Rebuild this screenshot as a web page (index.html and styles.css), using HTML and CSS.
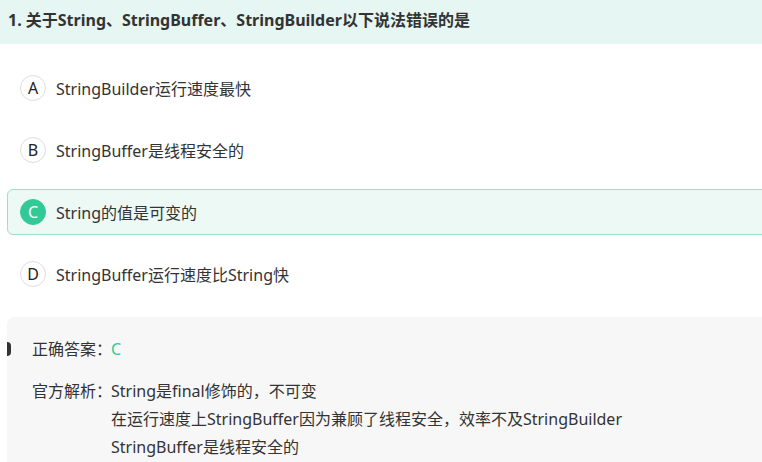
FILE: index.html
```html
<!DOCTYPE html>
<html lang="zh">
<head>
<meta charset="utf-8">
<link rel="stylesheet" href="styles.css">
</head>
<body>
<div class="page">
  <div class="q-title">1. 关于String、StringBuffer、StringBuilder以下说法错误的是</div>
  <div class="options">
    <div class="option"><span class="letter">A</span><span class="opt-text">StringBuilder运行速度最快</span></div>
    <div class="option"><span class="letter">B</span><span class="opt-text">StringBuffer是线程安全的</span></div>
    <div class="option selected"><span class="letter">C</span><span class="opt-text">String的值是可变的</span></div>
    <div class="option"><span class="letter">D</span><span class="opt-text">StringBuffer运行速度比String快</span></div>
  </div>
  <div class="answer">
    <div class="ans-row"><span class="label">正确答案：</span><span class="right">C</span></div>
    <div class="ans-row analysis"><span class="label">官方解析：</span>
      <div class="lines">
        <div>String是final修饰的，不可变</div>
        <div>在运行速度上StringBuffer因为兼顾了线程安全，效率不及StringBuilder</div>
        <div>StringBuffer是线程安全的</div>
      </div>
    </div>
  </div>
</div>
</body>
</html>
```
FILE: styles.css
```css
html, body {
  margin: 0;
  padding: 0;
  background: #ffffff;
  overflow: hidden;
}
.page {
  width: 800px;
  font-family: "Noto Sans", "Noto Sans CJK SC", sans-serif;
  font-size: 16px;
  color: #333333;
}
.q-title {
  height: 44px;
  line-height: 40px;
  padding-left: 8px;
  background: #e6f6f2;
  font-weight: 700;
  color: #333;
  white-space: nowrap;
}
.options {
  display: flex;
  flex-direction: column;
  gap: 16px;
  padding: 21px 0 0 7px;
}
.option {
  height: 46px;
  box-sizing: border-box;
  border: 1px solid transparent;
  border-radius: 6px;
  display: flex;
  align-items: center;
  gap: 10px;
  padding-left: 12px;
}
.option.selected {
  background: #edf9f5;
  border-color: #98e2c6;
}
.letter {
  width: 26px;
  height: 26px;
  box-sizing: border-box;
  border: 1px solid #dddddd;
  border-radius: 50%;
  display: flex;
  align-items: center;
  justify-content: center;
  font-size: 16px;
  color: #222;
  background: #fff;
}
.selected .letter {
  background: #33c996;
  border-color: #33c996;
  color: #fff;
}
.answer {
  position: relative;
  margin: 20px 0 0 7px;
  background: #f7f7f7;
  border-radius: 8px;
  padding: 18px 0 20px 25px;
  display: flex;
  flex-direction: column;
  gap: 14px;
}
.answer::before {
  content: "";
  position: absolute;
  left: 0;
  top: 25px;
  width: 4px;
  height: 14px;
  background: #333;
  border-radius: 0 7px 7px 0;
}
.ans-row {
  display: flex;
  line-height: 28px;
}
.label {
  width: 79px;
  flex: none;
  white-space: nowrap;
}
.lines {
  white-space: nowrap;
}
.right {
  color: #33c996;
}
```
